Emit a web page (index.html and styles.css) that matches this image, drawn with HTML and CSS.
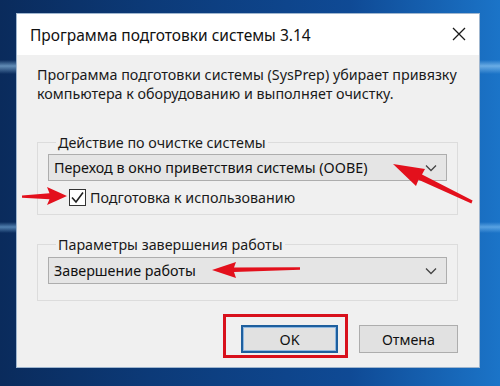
FILE: index.html
```html
<!DOCTYPE html>
<html lang="ru">
<head>
<meta charset="utf-8">
<title>Программа подготовки системы 3.14</title>
<link rel="stylesheet" href="styles.css">
</head>
<body>
<div class="desktop">
  <div class="dialog">
    <div class="titlebar">
      <span class="title">Программа подготовки системы 3.14</span>
      <svg class="close" width="14" height="14" viewBox="0 0 14 14"><path d="M1 1 L13 13 M13 1 L1 13" stroke="#1a1a1a" stroke-width="1.3" fill="none"/></svg>
    </div>
    <div class="content">
      <p class="desc"><span class="line">Программа подготовки системы (SysPrep) убирает привязку</span><span class="line">компьютера к оборудованию и выполняет очистку.</span></p>
      <fieldset class="group group-1">
        <legend>Действие по очистке системы</legend>
        <div class="combo"><span>Переход в окно приветствия системы (OOBE)</span><svg class="chev" width="12" height="8" viewBox="0 0 12 8"><path d="M1 1.5 L6 6.5 L11 1.5" stroke="#444" stroke-width="1.3" fill="none"/></svg></div>
        <label class="check">
          <span class="box"><svg width="15" height="15" viewBox="0 0 15 15"><path d="M2 7.5 L6 12 L13 2.5" stroke="#1f1f1f" stroke-width="1.6" fill="none"/></svg></span>
          <span>Подготовка к использованию</span>
        </label>
      </fieldset>
      <fieldset class="group group-2">
        <legend>Параметры завершения работы</legend>
        <div class="combo"><span>Завершение работы</span><svg class="chev" width="12" height="8" viewBox="0 0 12 8"><path d="M1 1.5 L6 6.5 L11 1.5" stroke="#444" stroke-width="1.3" fill="none"/></svg></div>
      </fieldset>
      <div class="buttons">
        <button class="btn btn-default">OK</button>
        <button class="btn">Отмена</button>
      </div>
    </div>
  </div>
  <svg class="marks" width="500" height="386" viewBox="0 0 500 386">
    <g fill="#e3101c">
      <polygon points="393,164 425,169 422,174.5 472.6,200.6 471.4,203.4 418.5,179.8 416,186"/>
      <polygon points="67,196 47,187 49.5,193.3 22,195.4 22,197.8 49.5,199.2 47,205"/>
      <polygon points="212,270 236,262 234,267.4 300,267.2 300,269.8 234,272 236,278"/>
    </g>
    <rect x="224.5" y="315.5" width="122" height="41" fill="none" stroke="#d8101c" stroke-width="3"/>
  </svg>
</div>
</body>
</html>
```

FILE: styles.css
```css
html, body {
  margin: 0;
  padding: 0;
}
body {
  width: 500px;
  height: 386px;
  overflow: hidden;
  font-family: "Noto Sans", "Open Sans", sans-serif;
  color: #111;
}
.desktop {
  position: relative;
  width: 500px;
  height: 386px;
  background:
    linear-gradient(180deg, rgba(255,255,255,0) 0, rgba(255,255,255,0) 60px, rgba(170,220,255,0.55) 66px, rgba(255,255,255,0) 74px, rgba(255,255,255,0) 222px, rgba(150,210,255,0.5) 227px, rgba(255,255,255,0) 233px),
    linear-gradient(90deg, #0a2b5c 0, #0c3a78 30%, #0f4a95 70%, #1b74c8 100%);
  overflow: hidden;
}
.dialog {
  position: relative;
  margin: 13px 0 0 16px;
  width: 464px;
  height: 355px;
  box-sizing: border-box;
  border: 1px solid #9fb6cf;
  display: flex;
  flex-direction: column;
  background: #f0f0f0;
}
.titlebar {
  height: 41px;
  background: #ffffff;
  display: flex;
  align-items: center;
  justify-content: space-between;
  padding: 0 13px 0 13px;
  flex: none;
}
.title {
  font-size: 15.5px;
  color: #111;
}
.close {
  display: block;
  margin-top: -2px;
}
.content {
  flex: 1;
  padding: 10px 21px 0 20px;
  display: flex;
  flex-direction: column;
}
.desc {
  margin: 0;
  font-size: 14.3px;
  line-height: 19px;
  color: #1a1a1a;
}
.line {
  display: block;
  white-space: nowrap;
}
.group {
  margin: 0;
  border: 1px solid #dcdcdc;
  padding: 0 10px 8px 10px;
  min-width: 0;
}
.group legend {
  font-size: 14.3px;
  line-height: 19px;
  padding: 0 2px;
  margin-left: 8px;
  color: #1a1a1a;
}
.group-1 {
  margin-top: 30px;
}
.group-2 {
  margin-top: 20px;
  padding-bottom: 16px;
}
.combo {
  height: 27px;
  box-sizing: border-box;
  border: 1px solid #adadad;
  background: #e5e5e5;
  display: flex;
  align-items: center;
  justify-content: space-between;
  padding: 0 9px 0 5px;
  font-size: 14.3px;
  color: #111;
  margin-top: 2px;
}
.group-2 .combo {
  margin-top: 3px;
}
.chev {
  display: block;
}
.check {
  display: flex;
  align-items: center;
  gap: 4px;
  margin: 8px 0 0 21px;
  font-size: 14.3px;
  line-height: 17px;
  color: #1a1a1a;
}
.box {
  width: 17px;
  height: 17px;
  box-sizing: border-box;
  border: 1px solid #333;
  background: #fff;
  display: flex;
  align-items: center;
  justify-content: center;
}
.box svg {
  display: block;
}
.buttons {
  display: flex;
  justify-content: flex-end;
  gap: 21px;
  margin-top: 24px;
}
.btn {
  font-family: "Noto Sans", "Open Sans", sans-serif;
  font-size: 14.3px;
  color: #111;
  height: 28px;
  width: 99px;
  background: #e1e1e1;
  border: 1px solid #adadad;
  padding: 0;
  margin: 0;
}
.btn-default {
  width: 97px;
  border: 2px solid #1e5f9e;
  box-shadow: inset 0 0 0 1px #8fb8e0;
}
.marks {
  position: absolute;
  left: 0;
  top: 0;
  pointer-events: none;
}
```
